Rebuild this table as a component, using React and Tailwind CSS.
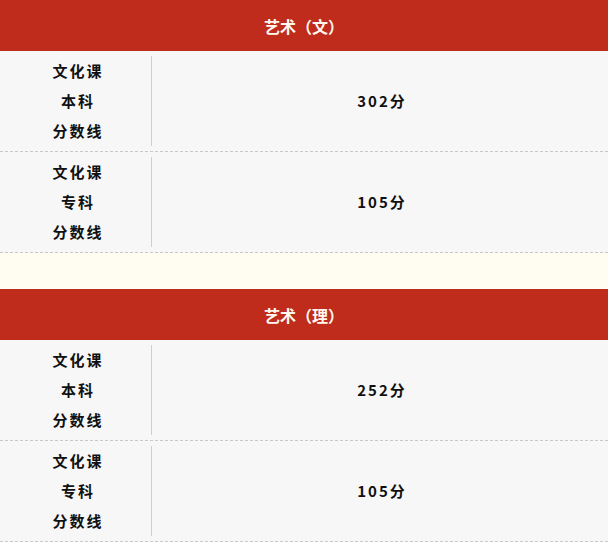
const sections = [
  {
    title: "艺术（文）",
    rows: [
      { level: "本科", score: "302分" },
      { level: "专科", score: "105分" },
    ],
  },
  {
    title: "艺术（理）",
    rows: [
      { level: "本科", score: "252分" },
      { level: "专科", score: "105分" },
    ],
  },
];

function ScoreRow({ level, score }) {
  return (
    <div className="flex h-[101px] border-b border-dashed border-[#c9c9c9] bg-[#f7f7f7] py-[5px]">
      <div className="flex w-[152px] shrink-0 flex-col items-center justify-center border-r border-[#cfcfcf] pl-[5px] text-[15px] font-bold leading-[30px] tracking-[2px] text-[#111]">
        <span>文化课</span>
        <span>{level}</span>
        <span>分数线</span>
      </div>
      <div className="flex flex-1 items-center justify-center pl-[4px] text-[15px] font-bold tracking-[2px] text-[#111]">
        {score}
      </div>
    </div>
  );
}

function Section({ title, rows }) {
  return (
    <div>
      <div className="flex h-[51px] items-center justify-center bg-[#bf2c1c] text-[16px] font-bold text-[#fff8f0]">
        {title}
      </div>
      {rows.map((r) => (
        <ScoreRow key={r.level} {...r} />
      ))}
    </div>
  );
}

export default function App() {
  return (
    <div
      className="w-[608px] h-[542px] overflow-hidden bg-[#fffcf2]"
      style={{ fontFamily: '"Noto Sans CJK SC", "Noto Sans", sans-serif' }}
    >
      <Section {...sections[0]} />
      <div className="h-[36px] bg-[#fffcf2]" />
      <Section {...sections[1]} />
    </div>
  );
}
